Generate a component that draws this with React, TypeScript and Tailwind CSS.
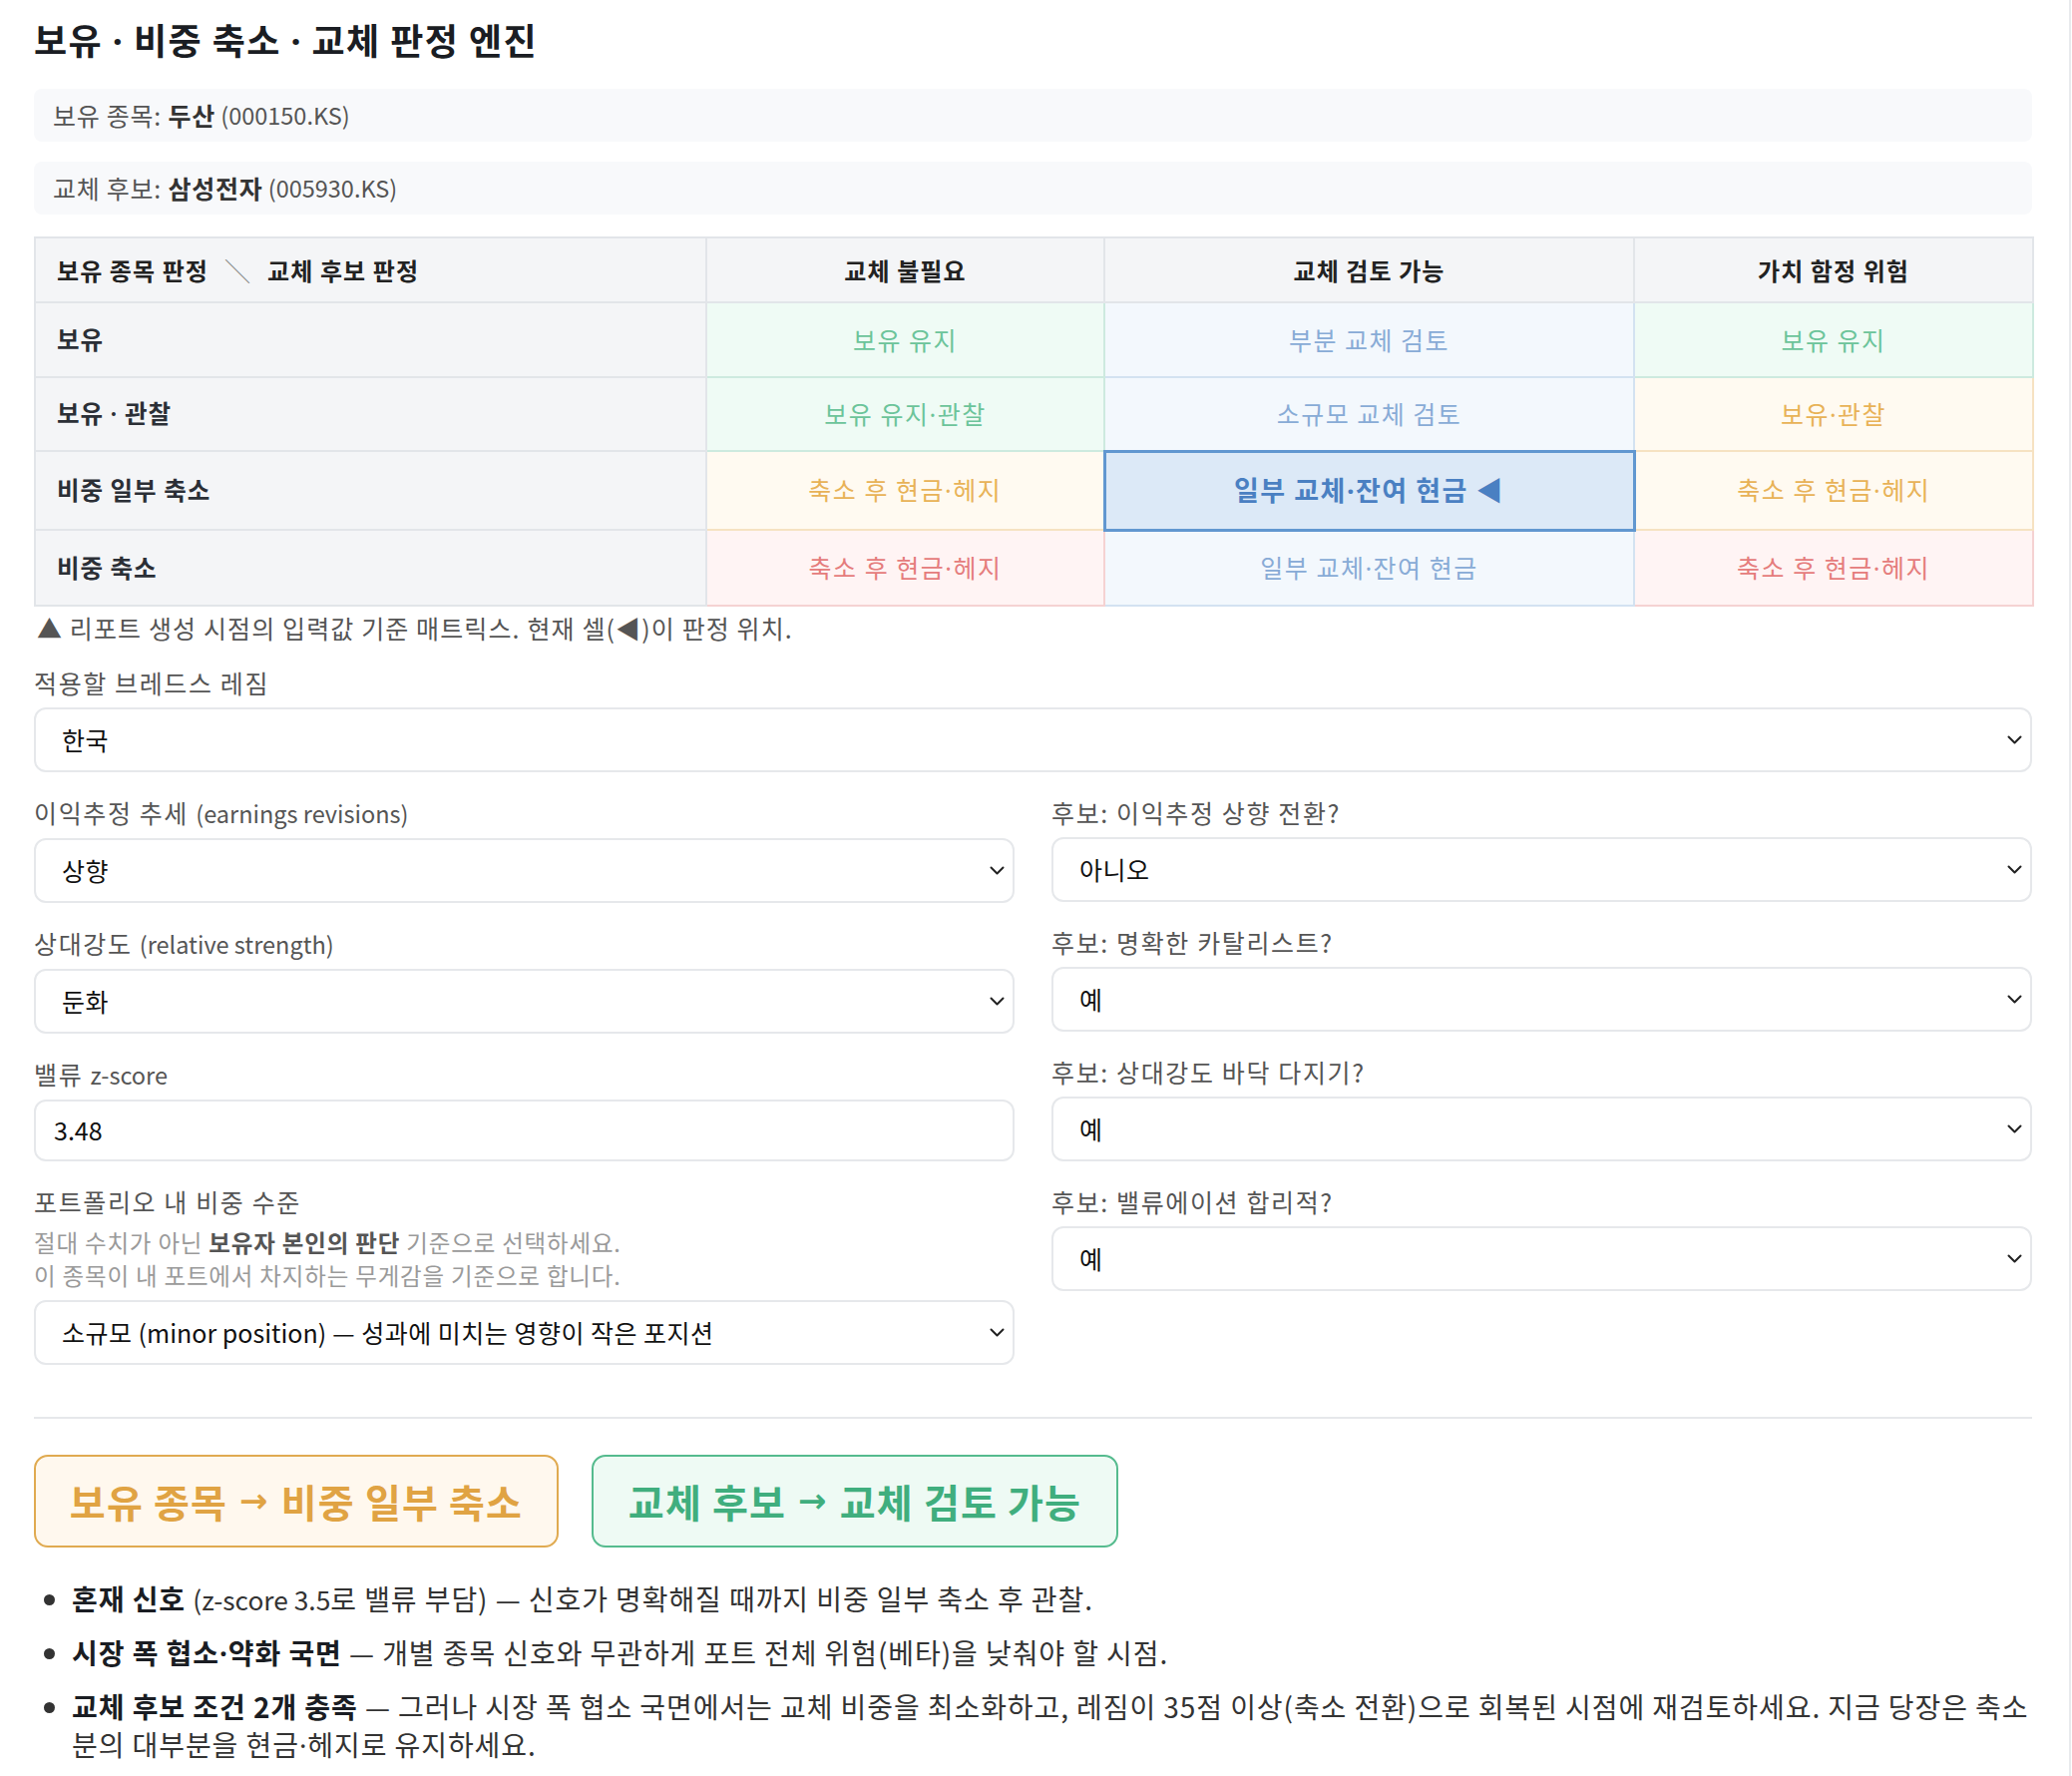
import React from "react";

type Tone = "g" | "b" | "o" | "r" | "cur";

const toneCls: Record<Tone, string> = {
  g: "bg-[#effbf5] text-[#6cc49a] border-[#cdeadf] text-[25px] tracking-[0.06em]",
  b: "bg-[#f3f8fd] text-[#88abd6] border-[#d3e2f1] text-[25px] tracking-[0.06em]",
  o: "bg-[#fffaf1] text-[#e8b257] border-[#f6e2c2] text-[25px] tracking-[0.06em]",
  r: "bg-[#fff4f4] text-[#e57c7c] border-[#f5d2d2] text-[25px] tracking-[0.06em]",
  cur: "bg-[#dce9f7] text-[#4a80c2] border-[#6197d0] font-bold text-[27px] tracking-[0.055em]",
};

function D() {
  return <span className="font-['Noto_Sans','DejaVu_Sans',sans-serif]">·</span>;
}

function L({ children }: { children: React.ReactNode }) {
  return <span className="tracking-normal text-[0.94em]">{children}</span>;
}

function withDots(text: string) {
  const parts = text.split("·");
  return parts.map((p, i) => (
    <React.Fragment key={i}>
      {p}
      {i < parts.length - 1 && <D />}
    </React.Fragment>
  ));
}

const rows: { label: string; h: string; cells: [Tone, string][] }[] = [
  { label: "보유", h: "h-[75px]", cells: [["g", "보유 유지"], ["b", "부분 교체 검토"], ["g", "보유 유지"]] },
  { label: "보유 · 관찰", h: "h-[74px]", cells: [["g", "보유 유지·관찰"], ["b", "소규모 교체 검토"], ["o", "보유·관찰"]] },
  { label: "비중 일부 축소", h: "h-[79px]", cells: [["o", "축소 후 현금·헤지"], ["cur", "일부 교체·잔여 현금 ◀"], ["o", "축소 후 현금·헤지"]] },
  { label: "비중 축소", h: "h-[76px]", cells: [["r", "축소 후 현금·헤지"], ["b", "일부 교체·잔여 현금"], ["r", "축소 후 현금·헤지"]] },
];

function Chevron() {
  return (
    <svg width="15" height="9" viewBox="0 0 15 9" fill="none" className="shrink-0">
      <path d="M1.5 1.5L7.5 7.5L13.5 1.5" stroke="#222" strokeWidth="2" strokeLinecap="round" strokeLinejoin="round" />
    </svg>
  );
}

function Select({ children }: { children: React.ReactNode }) {
  return (
    <div className="h-[65px] rounded-[12px] border-2 border-[#e6e8eb] bg-white flex items-center justify-between pl-[26px] pr-[8px]">
      <span className="text-[25px] tracking-[0.02em] text-[#111]">{children}</span>
      <Chevron />
    </div>
  );
}

function Label({ children }: { children: React.ReactNode }) {
  return <div className="text-[25px] tracking-[0.065em] leading-[30px] text-[#555] mb-[10px]">{children}</div>;
}

function Field({ label, value }: { label: React.ReactNode; value: string }) {
  return (
    <div className="mt-[25px]">
      <Label>{label}</Label>
      <Select>{value}</Select>
    </div>
  );
}

export default function App() {
  return (
    <div className="w-[2076px] min-h-[1780px] bg-white border-r-2 border-[#e8eaed] font-['Noto_Sans_CJK_KR','Noto_Sans',sans-serif]">
      <div className="w-[2003px] ml-[34px] pt-[15px] pb-[16px]">
        <h1 className="text-[36px] tracking-[0.04em] leading-[48px] font-bold text-[#1a1d23]">
          보유 <D /> 비중 축소 <D /> 교체 판정 엔진
        </h1>

        <div className="mt-[23px] h-[53px] rounded-[8px] bg-[#f8f9fb] px-[19px] flex items-center text-[25px] tracking-[0.03em] text-[#555] whitespace-pre">
          <span>보유 종목: </span>
          <span className="font-bold text-[#333]">두산</span>
          <L> (000150.KS)</L>
        </div>
        <div className="mt-[20px] h-[53px] rounded-[8px] bg-[#f8f9fb] px-[19px] flex items-center text-[25px] tracking-[0.03em] text-[#555] whitespace-pre">
          <span>교체 후보: </span>
          <span className="font-bold text-[#333]">삼성전자</span>
          <L> (005930.KS)</L>
        </div>

        <table className="mt-[22px] w-[2003px] border-collapse table-fixed">
          <colgroup>
            <col className="w-[673px]" />
            <col className="w-[399px]" />
            <col className="w-[531px]" />
            <col className="w-[400px]" />
          </colgroup>
          <thead>
            <tr className="h-[65px] bg-[#f4f5f7]">
              <th className="border-2 border-[#e2e5e9] text-left pl-[21px] text-[24px] tracking-[0.045em] font-bold text-[#222]">
                보유 종목 판정<span className="mx-[17px] font-normal text-[#888]">╲</span>교체 후보 판정
              </th>
              <th className="border-2 border-[#e2e5e9] text-center text-[24px] tracking-[0.045em] font-bold text-[#222]">교체 불필요</th>
              <th className="border-2 border-[#e2e5e9] text-center text-[24px] tracking-[0.045em] font-bold text-[#222]">교체 검토 가능</th>
              <th className="border-2 border-[#e2e5e9] text-center text-[24px] tracking-[0.045em] font-bold text-[#222]">가치 함정 위험</th>
            </tr>
          </thead>
          <tbody>
            {rows.map((row) => (
              <tr key={row.label} className={row.h}>
                <td className="border-2 border-[#e2e5e9] bg-[#f4f5f7] pl-[21px] text-[24.5px] tracking-[0.04em] font-semibold text-[#2b2f36]">
                  {withDots(row.label)}
                </td>
                {row.cells.map(([tone, text], i) => (
                  <td
                    key={i}
                    className={`text-center ${tone === "cur" ? "border-[3px]" : "border-2"} ${toneCls[tone]}`}
                  >
                    {withDots(text)}
                  </td>
                ))}
              </tr>
            ))}
          </tbody>
        </table>

        <div className="mt-[5px] text-[25px] tracking-[0.045em] leading-[32px] text-[#555] pl-[3px]">
          ▲ 리포트 생성 시점의 입력값 기준 매트릭스. 현재 셀(◀)이 판정 위치.
        </div>

        <div className="mt-[24px]">
          <Label>적용할 브레드스 레짐</Label>
          <Select>한국</Select>
        </div>

        <div className="grid grid-cols-2 gap-x-[37px] items-start">
          <div>
            <Field label={<>이익추정 추세 <L>(earnings revisions)</L></>} value="상향" />
            <Field label={<>상대강도 <L>(relative strength)</L></>} value="둔화" />
            <div className="mt-[25px]">
              <Label>밸류 <L>z-score</L></Label>
              <div className="h-[62px] rounded-[12px] border-2 border-[#e6e8eb] bg-white flex items-center pl-[18px]">
                <span className="text-[25px] text-[#111]">3.48</span>
              </div>
            </div>
            <div className="mt-[25px]">
              <Label>포트폴리오 내 비중 수준</Label>
              <div className="text-[23.5px] tracking-[0.035em] leading-[33px] text-[#9a9a9a] mb-[8px]">
                <div>
                  절대 수치가 아닌 <span className="font-bold text-[#555]">보유자 본인의 판단</span> 기준으로 선택하세요.
                </div>
                <div>이 종목이 내 포트에서 차지하는 무게감을 기준으로 합니다.</div>
              </div>
              <Select>
                소규모 <span className="tracking-normal">(minor position)</span> — 성과에 미치는 영향이 작은 포지션
              </Select>
            </div>
          </div>
          <div>
            <Field label="후보: 이익추정 상향 전환?" value="아니오" />
            <Field label="후보: 명확한 카탈리스트?" value="예" />
            <Field label="후보: 상대강도 바닥 다지기?" value="예" />
            <Field label="후보: 밸류에이션 합리적?" value="예" />
          </div>
        </div>

        <div className="mt-[52px] h-[2px] bg-[#e6e8eb]" />

        <div className="mt-[36px] flex gap-[33px]">
          <div className="h-[93px] w-[526px] rounded-[14px] border-2 border-[#e0aa50] bg-[#fff8ee] flex items-center justify-center text-[39px] tracking-[0.03em] font-bold text-[#e0a343]">
            보유 종목<span className="mx-[12px] font-['DejaVu_Sans',sans-serif] text-[34px]">→</span>비중 일부 축소
          </div>
          <div className="h-[93px] w-[528px] rounded-[14px] border-2 border-[#55bb8e] bg-[#eefaf4] flex items-center justify-center text-[39px] tracking-[0.03em] font-bold text-[#40ae7e]">
            교체 후보<span className="mx-[12px] font-['DejaVu_Sans',sans-serif] text-[34px]">→</span>교체 검토 가능
          </div>
        </div>

        <ul className="mt-[32px] list-disc pl-[38px] text-[28px] tracking-[0.033em] leading-[38px] text-[#333] flex flex-col gap-[15px]">
          <li>
            <b className="text-[#1a1d23]">혼재 신호</b> <L>(z-score 3.5</L>로 밸류 부담) — 신호가 명확해질 때까지 비중 일부 축소 후 관찰.
          </li>
          <li>
            <b className="text-[#1a1d23]">시장 폭 협소<D />약화 국면</b> — 개별 종목 신호와 무관하게 포트 전체 위험(베타)을 낮춰야 할 시점.
          </li>
          <li>
            <b className="text-[#1a1d23]">교체 후보 조건 2개 충족</b> — 그러나 시장 폭 협소 국면에서는 교체 비중을 최소화하고, 레짐이 35점 이상(축소 전환)으로 회복된 시점에 재검토하세요. 지금 당장은 축소분의 대부분을 현금<D />헤지로 유지하세요.
          </li>
        </ul>
      </div>
    </div>
  );
}
